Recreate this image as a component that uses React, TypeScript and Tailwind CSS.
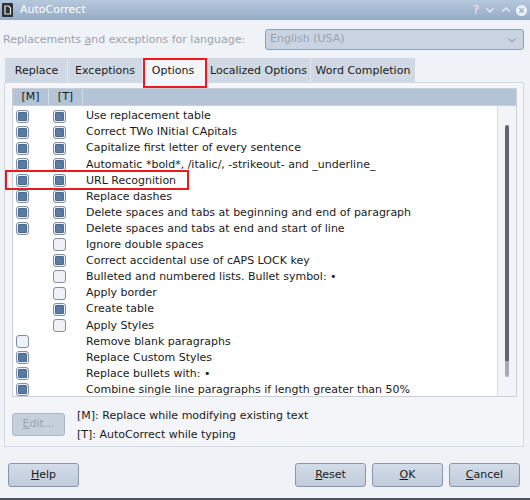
import React from "react";

type Row = { m: boolean | null; t: boolean | null; label: string };

const rows: Row[] = [
  { m: true, t: true, label: "Use replacement table" },
  { m: true, t: true, label: "Correct TWo INitial CApitals" },
  { m: true, t: true, label: "Capitalize first letter of every sentence" },
  { m: true, t: true, label: "Automatic *bold*, /italic/, -strikeout- and _underline_" },
  { m: true, t: true, label: "URL Recognition" },
  { m: true, t: true, label: "Replace dashes" },
  { m: true, t: true, label: "Delete spaces and tabs at beginning and end of paragraph" },
  { m: true, t: true, label: "Delete spaces and tabs at end and start of line" },
  { m: null, t: false, label: "Ignore double spaces" },
  { m: null, t: true, label: "Correct accidental use of cAPS LOCK key" },
  { m: null, t: false, label: "Bulleted and numbered lists. Bullet symbol: •" },
  { m: null, t: false, label: "Apply border" },
  { m: null, t: true, label: "Create table" },
  { m: null, t: false, label: "Apply Styles" },
  { m: false, t: null, label: "Remove blank paragraphs" },
  { m: true, t: null, label: "Replace Custom Styles" },
  { m: true, t: null, label: "Replace bullets with: •" },
  { m: true, t: null, label: "Combine single line paragraphs if length greater than 50%" },
];

function Box({ checked }: { checked: boolean }) {
  return (
    <div className="w-[13px] h-[13px] rounded-[3px] border border-[#7d8fa5] bg-[#eef1f6] flex items-center justify-center">
      {checked && <div className="w-[9px] h-[9px] rounded-[1px] border border-[#48688e] bg-[#5a7ba1]" />}
    </div>
  );
}

function Btn({ children, className = "" }: { children: React.ReactNode; className?: string }) {
  return (
    <div
      className={
        "h-[24px] w-[71px] rounded-[3px] border border-[#8797ac] bg-gradient-to-b from-[#d3dce8] to-[#c0cbdb] flex items-center justify-center text-[11px] text-[#1a1a1a] " +
        className
      }
    >
      {children}
    </div>
  );
}

export default function App() {
  return (
    <div className="w-[530px] h-[500px] bg-[#eff2f7] flex flex-col font-['DejaVu_Sans',sans-serif] text-[11px] text-[#1a1a1a] overflow-hidden">
      {/* Title bar */}
      <div className="h-[20px] bg-gradient-to-b from-[#b6c8dd] to-[#95abc6] flex items-center shrink-0">
        <svg width="11" height="14" viewBox="0 0 11 14" className="ml-[2px]">
          <rect x="0" y="0" width="11" height="14" rx="1" fill="#2e3236" />
          <path d="M3 3 H6.5 L8.5 5 V11 H3 Z" fill="none" stroke="#e8e8e8" strokeWidth="1.2" />
        </svg>
        <span className="ml-[7px] text-white text-[11px]">AutoCorrect</span>
        <div className="ml-auto flex items-center mr-[3px] text-[#e9eff6]">
          <span className="text-[12px] mr-[6px]">?</span>
          <svg width="10" height="10" viewBox="0 0 10 10" className="mr-[6px]">
            <path d="M1.5 3.5 L5 7 L8.5 3.5" fill="none" stroke="#e9eff6" strokeWidth="1.3" />
          </svg>
          <svg width="10" height="10" viewBox="0 0 10 10" className="mr-[5px]">
            <path d="M1.5 6.5 L5 3 L8.5 6.5" fill="none" stroke="#e9eff6" strokeWidth="1.3" />
          </svg>
          <svg width="11" height="11" viewBox="0 0 11 11">
            <circle cx="5.5" cy="5.5" r="5.5" fill="#eef2f7" />
            <path d="M3.3 3.3 L7.7 7.7 M7.7 3.3 L3.3 7.7" stroke="#9aaec6" strokeWidth="1.4" />
          </svg>
        </div>
      </div>

      {/* Language row */}
      <div className="mt-[9px] h-[21px] flex items-center shrink-0">
        <span className="ml-[3px] mt-[1px] text-[#9ba3ad]">
          Replacements <span className="underline">a</span>nd exceptions for language:
        </span>
        <div className="ml-auto mr-[6px] w-[259px] h-[21px] rounded-[3px] border border-[#8f9fb4] bg-[#c9d3e1] flex items-center">
          <span className="ml-[4px] text-[#9aa3ae]">English (USA)</span>
          <svg width="10" height="10" viewBox="0 0 10 10" className="ml-auto mr-[6px]">
            <path d="M1.5 3.5 L5 7 L8.5 3.5" fill="none" stroke="#9aa3ae" strokeWidth="1.1" />
          </svg>
        </div>
      </div>

      {/* Tabs */}
      <div className="mt-[8px] ml-[5px] h-[24px] flex items-end shrink-0 relative z-10">
        <div className="h-[24px] w-[63px] bg-[#d0d8e3] border-r border-[#e3e8ef] flex items-center justify-center pl-[1px] pt-[2px]">Replace</div>
        <div className="h-[24px] w-[75px] bg-[#d0d8e3] border-r border-[#e3e8ef] flex items-center justify-center pt-[2px]">Exceptions</div>
        <div className="relative h-[25px] -mb-[1px] w-[64px] bg-[#f3f5f9] flex items-center justify-center pr-[4px] pt-[1px]">
          Options
          <div className="absolute left-0 top-0 w-[64px] h-[30px] border-2 border-[#ea1a1f]" />
        </div>
        <div className="h-[24px] w-[104px] bg-[#d0d8e3] border-r border-[#e3e8ef] flex items-center justify-center pt-[2px]">Localized Options</div>
        <div className="h-[24px] w-[104px] bg-[#d0d8e3] flex items-center justify-center pt-[2px]">Word Completion</div>
      </div>

      {/* Panel */}
      <div className="ml-[4px] w-[520px] h-[365px] border border-[#d3d9e2] bg-[#f3f5f9] flex flex-col shrink-0">
        <div className="ml-[7px] mt-[5px] w-[505px] h-[309px] border border-[#c9d0da] bg-white flex flex-col">
          {/* header */}
          <div className="h-[17px] bg-[#b4c4d7] flex items-center shrink-0 border-b border-[#c9d0da]">
            <div className="w-[36px] h-full border-r border-[#d4dce6] flex items-center justify-center">[M]</div>
            <div className="w-[34px] h-full border-r border-[#d4dce6] flex items-center justify-center">[T]</div>
          </div>
          <div className="flex flex-1 min-h-0">
            <div className="flex-1 pt-[2px] overflow-y-clip">
              {rows.map((r, i) => (
                <div key={i} className="relative h-[16.1px] flex items-center">
                  <div className="w-[36px] pl-[3px]">{r.m !== null && <Box checked={r.m} />}</div>
                  <div className="w-[34px] pl-[4px]">{r.t !== null && <Box checked={r.t} />}</div>
                  <span className="pl-[3px] pt-[1px] whitespace-nowrap">{r.label}</span>
                  {i === 4 && (
                    <div className="absolute left-[-8px] top-[-2px] w-[184px] h-[20px] border-2 border-[#ea1a1f]" />
                  )}
                </div>
              ))}
            </div>
            <div className="w-[19px] border-l border-[#d6dce5] bg-[#f1f4f8] flex flex-col items-center">
              <div className="mt-[19px] w-[4px] h-[236px] rounded-t-[2px] bg-[#62676d]" />
              <div className="w-[4px] h-[16px] rounded-b-[2px] bg-[#a7abb1]" />
            </div>
          </div>
        </div>

        {/* footer of panel */}
        <div className="flex mt-[15px] ml-[7px]">
          <div className="w-[53px] h-[23px] mt-[1px] rounded-[3px] border border-[#a9b5c6] bg-[#c6d0dd] flex items-center justify-center text-[#9aa3ae]">
            <span>
              <span className="underline">E</span>dit...
            </span>
          </div>
          <div className="ml-[12px] flex flex-col leading-[19px] -mt-[6px]">
            <span>[M]: Replace while modifying existing text</span>
            <span>[T]: AutoCorrect while typing</span>
          </div>
        </div>
      </div>

      {/* Bottom buttons */}
      <div className="mt-[16px] flex items-center shrink-0">
        <Btn className="ml-[8px]">
          <span>
            <span className="underline">H</span>elp
          </span>
        </Btn>
        <Btn className="ml-auto">
          <span>
            <span className="underline">R</span>eset
          </span>
        </Btn>
        <Btn className="ml-[6px]">
          <span>
            <span className="underline">O</span>K
          </span>
        </Btn>
        <Btn className="ml-[6px] mr-[10px]">
          <span>
            <span className="underline">C</span>ancel
          </span>
        </Btn>
      </div>
      <div className="flex-1" />
      <div className="h-[2px] bg-[#4d555e] shrink-0" />
    </div>
  );
}
